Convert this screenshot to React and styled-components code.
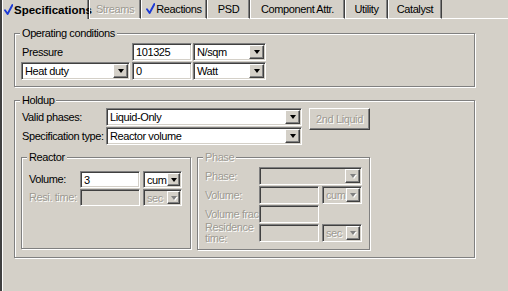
import React from "react";
import styled, { createGlobalStyle, css } from "styled-components";

const TABS = [
  { label: "Specifications", width: 87, active: true, checked: true },
  { label: "Streams", width: 52, disabled: true },
  { label: "Reactions", width: 66, checked: true },
  { label: "PSD", width: 43 },
  { label: "Component Attr.", width: 95 },
  { label: "Utility", width: 43 },
  { label: "Catalyst", width: 54 },
];

const Check = () => (
  <StCheck width="9" height="11" viewBox="0 0 9 11">
    <path d="M1 6.2 L3.6 10 L8.4 1" fill="none" stroke="#1c3ad6" strokeWidth="1.9" strokeLinecap="round" strokeLinejoin="round" />
  </StCheck>
);

const Select = ({ value, width, disabled, arrow = 15 }) => (
  <StSelect $width={width} $disabled={disabled}>
    <StSelectText>{value}</StSelectText>
    <StArrowButton $width={arrow}>
      <StArrow $disabled={disabled} />
    </StArrowButton>
  </StSelect>
);

const App = () => {
  return (
    <>
      <GlobalStyle />
      <StWindow>
        <StTabStrip>
          {TABS.map((tab) => (
            <StTab key={tab.label} $width={tab.width} $active={tab.active} $disabled={tab.disabled}>
              {tab.checked && <Check />}
              {tab.label}
            </StTab>
          ))}
          <StTabFiller />
        </StTabStrip>

        <StPanel>
          <StGroup $width={461} $pad="9px 0 6px 6px">
            <StGroupLabel>Operating conditions</StGroupLabel>
            <StOperatingGrid>
              <StLabel>Pressure</StLabel>
              <StInput $width={60}>101325</StInput>
              <Select value="N/sqm" width={73} />
              <Select value="Heat duty" width={109} />
              <StInput $width={60}>0</StInput>
              <Select value="Watt" width={73} />
            </StOperatingGrid>
          </StGroup>

          <StGroup $width={461} $pad="7px 0 7px 6px" $top={13}>
            <StGroupLabel>Holdup</StGroupLabel>
            <StHoldupGrid>
              <StLabel>Valid phases:</StLabel>
              <Select value="Liquid-Only" width={196} />
              <StButton disabled>2nd Liquid</StButton>
              <StLabel>Specification type:</StLabel>
              <Select value="Reactor volume" width={196} />
            </StHoldupGrid>

            <StSubRow>
              <StGroup $width={170} $height={92} $pad="13px 0 0 6px">
                <StGroupLabel>Reactor</StGroupLabel>
                <StReactorGrid>
                  <StLabel>Volume:</StLabel>
                  <StInput $width={60}>3</StInput>
                  <Select value="cum" width={39} arrow={13} />
                  <StLabel $disabled>Resi. time:</StLabel>
                  <StInput $width={60} $disabled />
                  <Select value="sec" width={39} arrow={13} disabled />
                </StReactorGrid>
              </StGroup>

              <StGroup $width={173} $height={93} $pad="9px 0 0 6px">
                <StGroupLabel $disabled>Phase</StGroupLabel>
                <StPhaseGrid>
                  <StLabel $disabled>Phase:</StLabel>
                  <StWide>
                    <Select value="" width={103} disabled />
                  </StWide>
                  <StLabel $disabled>Volume:</StLabel>
                  <StInput $width={60} $disabled />
                  <Select value="cum" width={40} arrow={14} disabled />
                  <StLabel $disabled>Volume frac:</StLabel>
                  <StInput $width={60} $disabled />
                  <span />
                  <StLabel $disabled $twoLine>
                    Residence
                    <br />
                    time:
                  </StLabel>
                  <StInput $width={60} $disabled />
                  <Select value="sec" width={40} arrow={14} disabled />
                </StPhaseGrid>
              </StGroup>
            </StSubRow>
          </StGroup>
        </StPanel>
      </StWindow>
    </>
  );
};

export default App;

const GlobalStyle = createGlobalStyle`
  body {
    margin: 0;
    background-color: #d4d0c8;
    font-family: "Liberation Sans", Arial, sans-serif;
    font-size: 11px;
    letter-spacing: -0.4px;
    color: #000;
  }
`;

const disabledText = css`
  color: #9d9a92;
  text-shadow: 1px 1px 0 #fff;
`;

const sunken = css`
  border: 1px solid;
  border-color: #808080 #fff #fff #808080;
  box-shadow: inset 1px 1px 0 #404040, inset -1px -1px 0 #d4d0c8;
`;

const raised = css`
  border: 1px solid;
  border-color: #fff #404040 #404040 #fff;
  box-shadow: inset -1px -1px 0 #808080;
  background-color: #d4d0c8;
`;

const StWindow = styled.div`
  display: flex;
  flex-direction: column;

  width: 508px;
  height: 291px;
  box-sizing: border-box;
  overflow: hidden;

  border-left: 2px solid #404040;
`;

const StTabStrip = styled.div`
  display: flex;

  height: 19px;
`;

const StTab = styled.div`
  display: flex;
  justify-content: center;
  align-items: center;

  width: ${(p) => p.$width}px;
  box-sizing: border-box;
  flex-shrink: 0;

  border-left: 1px solid #fff;
  border-right: 1px solid #404040;
  border-bottom: 1px solid #fff;
  box-shadow: inset -1px 0 0 #808080;

  white-space: nowrap;

  ${(p) =>
    p.$active &&
    css`
      justify-content: flex-start;
      padding-left: 1px;
      border-bottom: none;
      font-weight: bold;
      letter-spacing: 0;
      font-size: 11.5px;
    `}

  ${(p) => p.$disabled && disabledText}
`;

const StCheck = styled.svg`
  flex-shrink: 0;
  margin-right: 1px;
  margin-top: -1px;
`;

const StTabFiller = styled.div`
  flex: 1;

  border-bottom: 1px solid #fff;
`;

const StPanel = styled.div`
  flex: 1;
  display: flex;
  flex-direction: column;
  align-items: flex-start;

  padding: 14px 0 0 11px;

  border-left: 1px solid #fff;
`;

const StGroup = styled.div`
  position: relative;

  width: ${(p) => p.$width}px;
  height: ${(p) => (p.$height ? `${p.$height}px` : "auto")};
  box-sizing: border-box;
  margin-top: ${(p) => p.$top || 0}px;
  padding: ${(p) => p.$pad};

  border: 1px solid #808080;
  box-shadow: inset 1px 1px 0 #fff, 1px 1px 0 #fff;
`;

const StGroupLabel = styled.span`
  position: absolute;
  top: -7px;
  left: 5px;

  padding: 0 2px;
  background-color: #d4d0c8;

  line-height: 13px;
  white-space: nowrap;

  ${(p) => p.$disabled && disabledText}
`;

const StLabel = styled.span`
  align-self: center;

  padding-left: 1px;

  line-height: ${(p) => (p.$twoLine ? "11px" : "13px")};
  white-space: nowrap;

  ${(p) => p.$disabled && disabledText}
`;

const StOperatingGrid = styled.div`
  display: grid;
  grid-template-columns: 111px 61px 73px;
  grid-auto-rows: 18px;
  row-gap: 1px;
`;

const StHoldupGrid = styled.div`
  display: grid;
  grid-template-columns: 85px 196px 68px;
  grid-auto-rows: 18px;
  row-gap: 1px;
`;

const StReactorGrid = styled.div`
  display: grid;
  grid-template-columns: 52px 63px 39px;
  grid-auto-rows: 17px;
  row-gap: 1px;
`;

const StPhaseGrid = styled.div`
  display: grid;
  grid-template-columns: 55px 63px 40px;
  grid-auto-rows: 18px;
  row-gap: 1px;
`;

const StWide = styled.div`
  grid-column: 2 / span 2;
  display: flex;
`;

const StSubRow = styled.div`
  display: flex;
  gap: 6px;

  margin-top: 12px;
`;

const StInput = styled.div`
  display: flex;
  align-items: center;

  width: ${(p) => p.$width}px;
  height: 100%;
  box-sizing: border-box;
  padding: 0 3px;

  ${sunken}
  background-color: ${(p) => (p.$disabled ? "#d4d0c8" : "#fff")};
`;

const StSelect = styled.div`
  display: flex;

  width: ${(p) => p.$width}px;
  height: 100%;
  box-sizing: border-box;
  padding: 1px;

  ${sunken}
  background-color: ${(p) => (p.$disabled ? "#d4d0c8" : "#fff")};
  ${(p) => p.$disabled && disabledText}
`;

const StSelectText = styled.span`
  flex: 1;
  display: flex;
  align-items: center;
  min-width: 0;

  padding-left: 2px;

  white-space: nowrap;
`;

const StArrowButton = styled.div`
  display: flex;
  justify-content: center;
  align-items: center;

  width: ${(p) => p.$width}px;
  box-sizing: border-box;
  flex-shrink: 0;

  ${raised}
`;

const StArrow = styled.div`
  width: 0;
  height: 0;

  border-left: 3.5px solid transparent;
  border-right: 3.5px solid transparent;
  border-top: 4px solid ${(p) => (p.$disabled ? "#808080" : "#000")};

  ${(p) => p.$disabled && "filter: drop-shadow(1px 1px 0 #fff);"}
`;

const StButton = styled.button`
  grid-row: 1 / span 2;
  grid-column: 3;
  justify-self: end;
  align-self: start;

  width: 61px;
  height: 22px;
  padding: 0;

  ${raised}

  font-family: inherit;
  font-size: 11px;
  letter-spacing: -0.4px;
  ${disabledText}
`;
